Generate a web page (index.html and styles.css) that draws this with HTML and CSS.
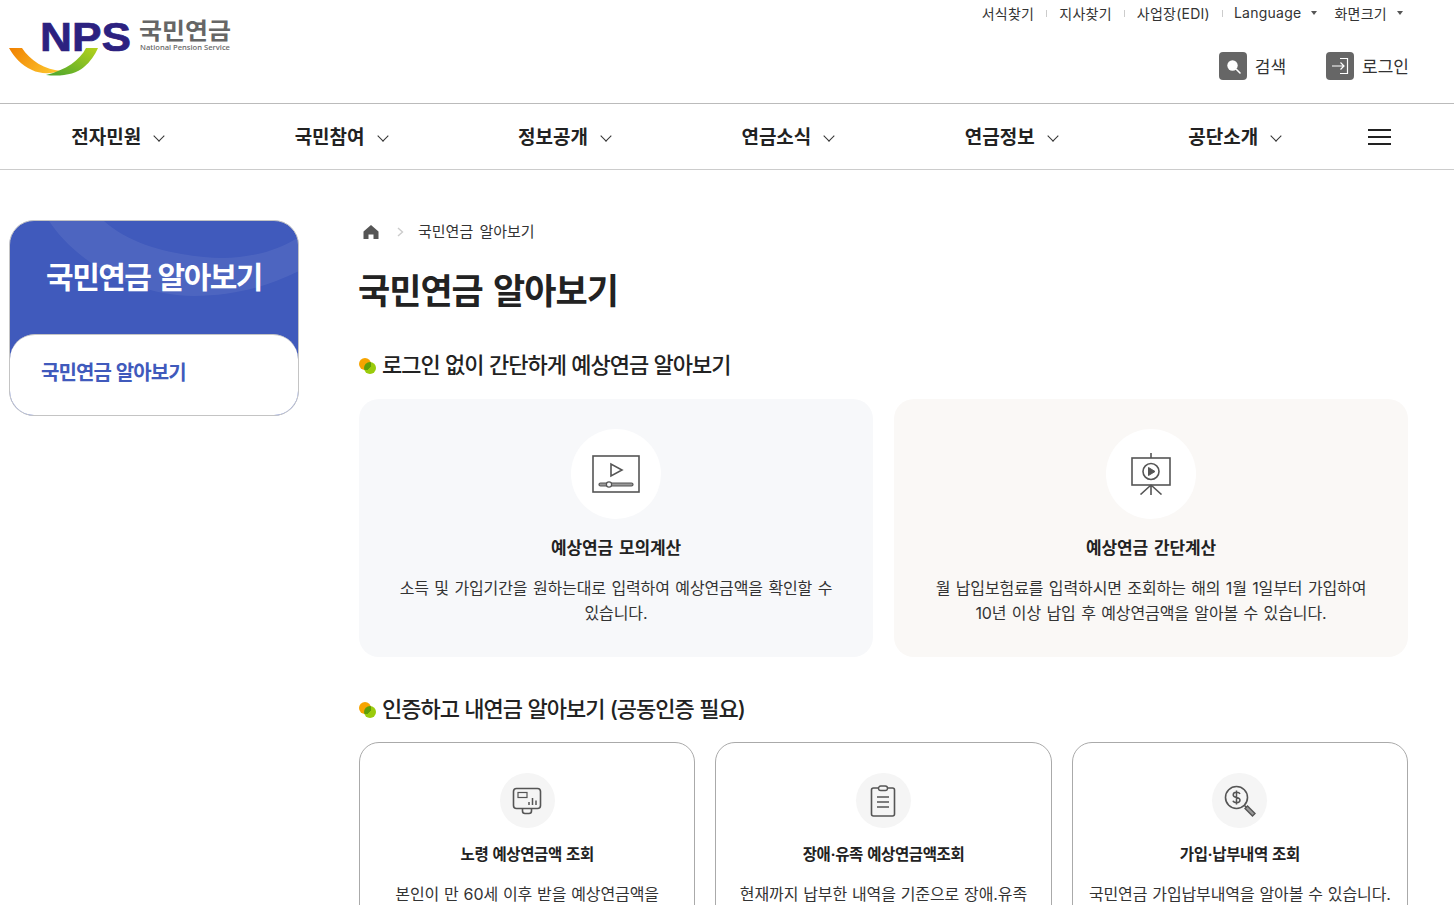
FILE: index.html
```html
<!DOCTYPE html>
<html lang="ko">
<head>
    <meta charset="UTF-8">
    <meta name="viewport" content="width=device-width, initial-scale=1.0">
    <title>국민연금 알아보기</title>
    <link rel="stylesheet" href="styles.css">
</head>
<body>
    <header class="site-header">
        <a class="logo" href="#">
            <svg width="240" height="90" viewBox="0 0 240 90">
                <defs>
                    <linearGradient id="swooshOrange" x1="0" y1="0" x2="1" y2="0.4">
                        <stop offset="0" stop-color="#f08000"/>
                        <stop offset="1" stop-color="#fcc12a"/>
                    </linearGradient>
                    <linearGradient id="swooshGreen" x1="1" y1="0" x2="0" y2="1">
                        <stop offset="0" stop-color="#b5d21c"/>
                        <stop offset="1" stop-color="#4aa52e"/>
                    </linearGradient>
                </defs>
                <text class="logo-nps" x="40" y="51" textLength="91" lengthAdjust="spacingAndGlyphs">NPS</text>
                <path d="M9 48 H22 C30 60 44 70 63 71 C50 74 40 74 32 70 C21 65 14 57 9 48 Z" fill="url(#swooshOrange)"/>
                <path d="M98 48 H86 C80 60 66 70 46 75 C62 77 76 74 84 67 C90 62 95 55 98 48 Z" fill="url(#swooshGreen)"/>
                <text class="logo-ko" x="139" y="39" textLength="92" lengthAdjust="spacingAndGlyphs">국민연금</text>
                <text class="logo-en" x="140" y="50" textLength="90" lengthAdjust="spacingAndGlyphs">National Pension Service</text>
            </svg>
        </a>
        <div class="header-right">
            <ul class="util-menu">
                <li><a href="#">서식찾기</a></li>
                <li class="util-sep"></li>
                <li><a href="#">지사찾기</a></li>
                <li class="util-sep"></li>
                <li><a href="#">사업장(EDI)</a></li>
                <li class="util-sep last"></li>
                <li class="has-caret"><a href="#">Language</a><span class="caret"></span></li>
                <li class="has-caret"><a href="#">화면크기</a><span class="caret"></span></li>
            </ul>
            <div class="header-actions">
                <a class="action" href="#">
                    <span class="action-icon">
                        <svg width="28" height="28" viewBox="0 0 28 28">
                            <circle cx="13.5" cy="13.5" r="5.2" fill="#fff"/>
                            <path d="M17.5 17.5 L21 21" stroke="#fff" stroke-width="1.6" stroke-linecap="round"/>
                        </svg>
                    </span>
                    <span class="action-label">검색</span>
                </a>
                <a class="action" href="#">
                    <span class="action-icon">
                        <svg width="28" height="28" viewBox="0 0 28 28" fill="none" stroke="#fff" stroke-width="1.2">
                            <path d="M6 14 H18 M14.5 10.5 L18 14 L14.5 17.5"/>
                            <path d="M14 6.5 H21.5 V21.5 H14"/>
                        </svg>
                    </span>
                    <span class="action-label">로그인</span>
                </a>
            </div>
        </div>
    </header>

    <nav class="gnb">
        <a class="gnb-item" href="#">전자민원<span class="chev"></span></a>
        <a class="gnb-item" href="#">국민참여<span class="chev"></span></a>
        <a class="gnb-item" href="#">정보공개<span class="chev"></span></a>
        <a class="gnb-item" href="#">연금소식<span class="chev"></span></a>
        <a class="gnb-item" href="#">연금정보<span class="chev"></span></a>
        <a class="gnb-item" href="#">공단소개<span class="chev"></span></a>
        <button class="hamburger" type="button" aria-label="전체메뉴"><span></span><span></span><span></span></button>
    </nav>

    <div class="container">
        <aside class="side">
            <div class="side-head">
                <svg class="side-deco" width="290" height="114" viewBox="0 0 290 114">
                    <path d="M40 0 C70 45 130 75 185 75 C225 75 260 65 290 50 V16 C265 32 230 40 195 36 C155 32 120 22 95 0 Z" fill="#fff" opacity="0.07"/>
                </svg>
                <h2 class="side-title">국민연금 알아보기</h2>
            </div>
            <div class="side-body"><a href="#">국민연금 알아보기</a></div>
        </aside>

        <main class="content">
            <div class="breadcrumb">
                <svg width="16" height="16" viewBox="0 0 16 16"><path d="M8 1 L15.5 7.5 V15 H10.5 V10.5 H5.5 V15 H0.5 V7.5 Z" fill="#555"/></svg>
                <svg class="crumb-sep" width="7" height="10" viewBox="0 0 7 10"><path d="M1 1 L5.5 5 L1 9" fill="none" stroke="#ccc" stroke-width="1.4"/></svg>
                <span class="crumb-text">국민연금 알아보기</span>
            </div>
            <h1 class="page-title">국민연금 알아보기</h1>

            <h3 class="sec-title">로그인 없이 간단하게 예상연금 알아보기</h3>
            <div class="big-cards">
                <a class="big-card" href="#">
                    <span class="circle">
                        <svg width="48" height="38" viewBox="0 0 48 38" fill="none" stroke="#555">
                            <rect x="1" y="1" width="46" height="36" stroke-width="1.6"/>
                            <path d="M19 9 V21 L30 15 Z" stroke-width="1.6"/>
                            <rect x="7" y="28" width="34" height="3" rx="1.5" fill="#999" stroke-width="1.2"/>
                            <circle cx="17" cy="29.5" r="2.6" fill="#f7f8fa" stroke-width="1.2"/>
                        </svg>
                    </span>
                    <strong class="card-title">예상연금 모의계산</strong>
                    <p>소득 및 가입기간을 원하는대로 입력하여 예상연금액을 확인할 수 있습니다.</p>
                </a>
                <a class="big-card warm" href="#">
                    <span class="circle">
                        <svg width="42" height="42" viewBox="0 0 42 42" fill="none" stroke="#555" stroke-width="1.6">
                            <path d="M21 0 V5"/>
                            <rect x="2" y="5" width="38" height="27"/>
                            <circle cx="21" cy="18.5" r="8"/>
                            <path d="M18.5 14.5 V22.5 L25 18.5 Z" fill="#555" stroke-width="1"/>
                            <path d="M21 32 V42 M21 32 L10.5 41.5 M21 32 L31.5 41.5"/>
                        </svg>
                    </span>
                    <strong class="card-title">예상연금 간단계산</strong>
                    <p>월 납입보험료를 입력하시면 조회하는 해의 1월 1일부터 가입하여<br>10년 이상 납입 후 예상연금액을 알아볼 수 있습니다.</p>
                </a>
            </div>

            <h3 class="sec-title">인증하고 내연금 알아보기 (공동인증 필요)</h3>
            <div class="small-cards">
                <a class="small-card" href="#">
                    <span class="circle small">
                        <svg width="30" height="28" viewBox="0 0 30 28" fill="none" stroke="#555" stroke-width="1.6">
                            <rect x="1.5" y="1.5" width="27" height="20" rx="3"/>
                            <rect x="6" y="5.5" width="9" height="5" stroke-width="1.2"/>
                            <path d="M17 18 V15 M20.5 18 V11 M24 18 V13.5" stroke-width="1.5"/>
                            <path d="M10.5 21.5 V24 C10.5 26 12 26.5 13 26.5 H17 C18 26.5 19.5 26 19.5 24 V21.5"/>
                        </svg>
                    </span>
                    <strong class="card-title">노령 예상연금액 조회</strong>
                    <p>본인이 만 60세 이후 받을 예상연금액을 알아볼 수 있습니다.</p>
                </a>
                <a class="small-card" href="#">
                    <span class="circle small">
                        <svg width="26" height="32" viewBox="0 0 26 32" fill="none" stroke="#555" stroke-width="1.6">
                            <path d="M8 3 H3.5 C2 3 1.5 4 1.5 5 V29 C1.5 30 2 31 3.5 31 H22.5 C24 31 24.5 30 24.5 29 V5 C24.5 4 24 3 22.5 3 H18"/>
                            <rect x="8.5" y="1" width="9" height="4.5" rx="2.2" stroke-width="1.4"/>
                            <path d="M7 12 H19 M7 17 H19 M7 22 H19"/>
                        </svg>
                    </span>
                    <strong class="card-title">장애·유족 예상연금액조회</strong>
                    <p>현재까지 납부한 내역을 기준으로 장애.유족 연금액을 알아볼 수 있습니다.</p>
                </a>
                <a class="small-card" href="#">
                    <span class="circle small">
                        <svg width="32" height="32" viewBox="0 0 32 32" fill="none" stroke="#555" stroke-width="1.6">
                            <circle cx="12.5" cy="12.5" r="11"/>
                            <path d="M20.5 20.5 L22.5 22.5"/>
                            <path d="M21 23.5 L23.5 21 L31 28.5 L28.5 31 Z" fill="#999" stroke-width="1.4"/>
                            <path d="M16 9 C15.5 7.8 14 7.3 12.5 7.3 C10.7 7.3 9.2 8.2 9.2 10 C9.2 13.4 16 11.6 16 15 C16 16.8 14.4 17.7 12.5 17.7 C10.8 17.7 9.4 17 9 15.8 M12.5 5.5 V19.5" stroke-width="1.5"/>
                        </svg>
                    </span>
                    <strong class="card-title">가입·납부내역 조회</strong>
                    <p>국민연금 가입납부내역을 알아볼 수 있습니다.</p>
                </a>
            </div>
        </main>
    </div>
</body>
</html>
```

FILE: styles.css
```css
* {
    box-sizing: border-box;
}

html, body {
    height: 905px;
    overflow: hidden;
}

body {
    margin: 0;
    font-family: Inter, "Noto Sans CJK KR", sans-serif;
    color: #222;
    background: #fff;
}

a {
    color: inherit;
    text-decoration: none;
}

/* header */
.site-header {
    display: flex;
    justify-content: space-between;
    height: 104px;
    padding-right: 45px;
    border-bottom: 1px solid #bbb;
}

.logo {
    display: block;
    height: 90px;
}

.logo-nps {
    font-family: "Liberation Sans", sans-serif;
    font-size: 41px;
    font-weight: 700;
    fill: #2c2180;
    stroke: #2c2180;
    stroke-width: 0.7px;
}

.logo-ko {
    font-family: "Noto Sans CJK KR", sans-serif;
    font-size: 23px;
    font-weight: 700;
    fill: #666;
}

.logo-en {
    font-family: "Noto Sans", sans-serif;
    font-size: 7.5px;
    font-weight: 500;
    fill: #666;
}

.header-right {
    display: flex;
    flex-direction: column;
    align-items: flex-end;
}

.util-menu {
    display: flex;
    align-items: center;
    height: 27px;
    margin: 0 6px 0 0;
    padding: 0 0 2px;
    list-style: none;
    font-size: 14px;
    letter-spacing: 0.25px;
    color: #333;
}

.util-sep {
    width: 1px;
    height: 7px;
    margin: 2px 12px 0;
    background: #ccc;
}

.util-sep.last {
    margin-right: 11px;
}

.has-caret {
    display: flex;
    align-items: center;
}

.has-caret + .has-caret {
    margin-left: 17px;
}

.caret {
    width: 0;
    height: 0;
    margin-left: 10px;
    border: 3.5px solid transparent;
    border-top: 4px solid #555;
    border-bottom: 0;
}

.header-actions {
    display: flex;
    gap: 40px;
    margin-top: 25px;
}

.action {
    display: flex;
    align-items: center;
    gap: 8px;
    font-size: 17px;
    color: #333;
}

.action-label {
    padding-bottom: 2px;
}

.action-icon {
    display: block;
    width: 28px;
    height: 28px;
    border-radius: 4px;
    background: #666;
}

.action-icon svg {
    display: block;
}

/* gnb */
.gnb {
    display: flex;
    align-items: center;
    height: 66px;
    padding-left: 5.5px;
    border-bottom: 1px solid #ccc;
}

.gnb-item {
    display: flex;
    align-items: center;
    justify-content: center;
    width: 223.4px;
    padding-bottom: 2px;
    font-size: 19px;
    font-weight: 700;
    color: #222;
}

.chev {
    width: 8px;
    height: 8px;
    margin: 0 0 0 14px;
    border-right: 1.6px solid #333;
    border-bottom: 1.6px solid #333;
    transform: rotate(45deg);
}

.hamburger {
    display: flex;
    flex-direction: column;
    gap: 5px;
    width: 23px;
    margin-left: 22.5px;
    padding: 0;
    border: 0;
    background: none;
}

.hamburger span {
    display: block;
    width: 23px;
    height: 2px;
    background: #222;
}

/* layout */
.container {
    display: flex;
    width: 1408px;
    padding: 50px 0 0 9px;
    gap: 60px;
}

/* side */
.side {
    flex: 0 0 290px;
    height: 196px;
    border: 1px solid #c4c4c4;
    border-radius: 25px;
    overflow: hidden;
    background: #405abc;
}

.side-head {
    position: relative;
    height: 113px;
}

.side-deco {
    position: absolute;
    top: 0;
    left: -1px;
}

.side-title {
    position: relative;
    margin: 0;
    padding-top: 33px;
    font-size: 30px;
    font-weight: 700;
    line-height: 46px;
    letter-spacing: -1.5px;
    word-spacing: 1.5px;
    text-align: center;
    color: #fff;
}

.side-body {
    height: 82px;
    padding: 22px 31px 0;
    border-top: 1px solid #c4c4c4;
    border-radius: 25px 25px 0 0;
    background: #fff;
    font-size: 20px;
    font-weight: 700;
    line-height: 32px;
    letter-spacing: -0.9px;
    word-spacing: 1px;
    color: #405abc;
}

/* content */
.content {
    flex: 1;
    min-width: 0;
}

.breadcrumb {
    display: flex;
    align-items: center;
    height: 22px;
    font-size: 15px;
    word-spacing: 2px;
    color: #333;
}

.breadcrumb svg:first-child {
    margin: 2px 0 0 4px;
}

.crumb-sep {
    margin: 2px 14px 0 18px;
}

.crumb-text {
    padding-bottom: 2px;
}

.page-title {
    margin: 23px 0 0 -1px;
    font-size: 35px;
    font-weight: 700;
    line-height: 52px;
    letter-spacing: -1px;
    word-spacing: 3px;
    color: #222;
}

.sec-title {
    position: relative;
    margin: 0;
    padding-left: 23px;
    font-size: 22px;
    font-weight: 500;
    line-height: 34px;
    letter-spacing: -1px;
    word-spacing: 0.5px;
    color: #222;
}

.sec-title::before,
.sec-title::after {
    content: '';
    position: absolute;
    width: 12px;
    height: 12px;
    border-radius: 50%;
}

.sec-title::before {
    left: 0;
    top: 10px;
    background: #f7a400;
}

.sec-title::after {
    left: 4.5px;
    top: 14px;
    background: radial-gradient(circle 6px at 1.5px 2px, #5f9e08 99%, #9acb0b 100%);
}

.page-title + .sec-title {
    margin-top: 31px;
}

.big-cards {
    display: grid;
    grid-template-columns: 1fr 1fr;
    gap: 21px;
    margin: 17px 0 35px;
}

.big-card {
    display: flex;
    flex-direction: column;
    align-items: center;
    height: 258px;
    padding: 30px 30px 0;
    border-radius: 20px;
    background: #f7f8fa;
    text-align: center;
}

.big-card.warm {
    background: #faf8f6;
}

.circle {
    display: flex;
    align-items: center;
    justify-content: center;
    width: 90px;
    height: 90px;
    border-radius: 50%;
    background: #fff;
}

.card-title {
    margin-top: 16px;
    font-size: 17px;
    font-weight: 700;
    line-height: 26px;
    letter-spacing: -0.1px;
    word-spacing: 2px;
}

.big-card p,
.small-card p {
    margin: 15px 0 0;
    font-size: 16px;
    line-height: 25px;
    letter-spacing: -0.1px;
    word-spacing: 1px;
    color: #333;
    word-break: keep-all;
}

.small-cards {
    display: grid;
    grid-template-columns: repeat(3, 1fr);
    gap: 20px;
    margin-top: 16px;
}

.small-card {
    display: flex;
    flex-direction: column;
    align-items: center;
    height: 240px;
    padding: 30px 16px 0;
    border: 1px solid #aaa;
    border-radius: 20px;
    text-align: center;
}

.circle.small {
    width: 55px;
    height: 55px;
    background: #f5f5f5;
}

.small-card .card-title {
    margin-top: 14px;
    font-size: 15.5px;
    letter-spacing: -0.4px;
    word-spacing: 1px;
}

.small-card p {
    margin-top: 14px;
    word-spacing: 0.5px;
}
```
